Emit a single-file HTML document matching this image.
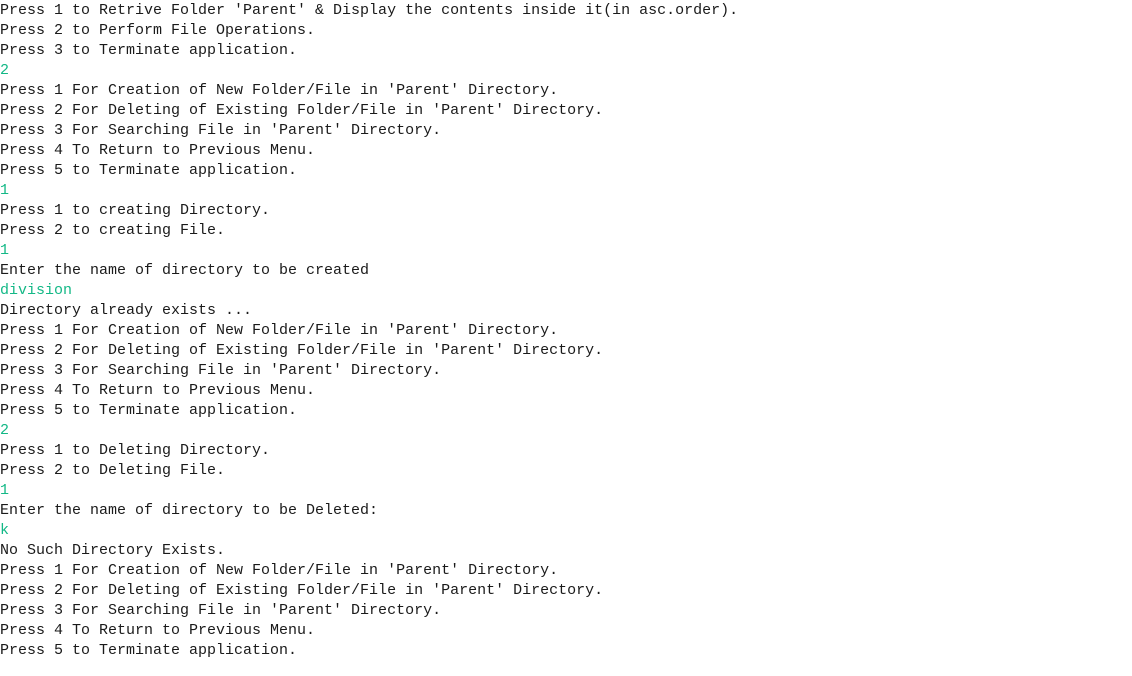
<!DOCTYPE html>
<html><head><style>
html,body{margin:0;padding:0;background:#fff;width:1132px;height:676px;overflow:hidden}
pre{margin:0;padding:0;font-family:"Liberation Mono",monospace;font-size:15px;line-height:20px;color:#1a1a1a;position:relative;top:1px}
.g{color:#13b886}
.c{border-left:1px solid #000;margin-left:-1px}
</style></head><body><pre>Press 1 to Retrive Folder 'Parent' &amp; Display the contents inside it(in asc.order).
Press 2 to Perform File Operations.
Press 3 to Terminate application.
<span class="g">2</span>
Press 1 For Creation of New Folder/File in 'Parent' Directory.
Press 2 For Deleting of Existing Folder/File in 'Parent' Directory.
Press 3 For Searching File in 'Parent' Directory.
Press 4 To Return to Previous Menu.
Press 5 to Terminate application.
<span class="g">1</span>
Press 1 to creating Directory.
Press 2 to creating File.
<span class="g">1</span>
Enter the name of directory to be created
<span class="g">division</span>
Directory already exists ...
Press 1 For Creation of New Folder/File in 'Parent' Directory.
Press 2 For Deleting of Existing Folder/File in 'Parent' Directory.
Press 3 For Searching File in 'Parent' Directory.
Press 4 To Return to Previous Menu.
Press 5 to Terminate application.
<span class="g">2</span>
Press 1 to Deleting Directory.
Press 2 to Deleting File.
<span class="g">1</span>
Enter the name of directory to be Deleted:
<span class="g">k</span>
<span class="c">N</span>o Such Directory Exists.
Press 1 For Creation of New Folder/File in 'Parent' Directory.
Press 2 For Deleting of Existing Folder/File in 'Parent' Directory.
Press 3 For Searching File in 'Parent' Directory.
Press 4 To Return to Previous Menu.
Press 5 to Terminate application.
</pre></body></html>
